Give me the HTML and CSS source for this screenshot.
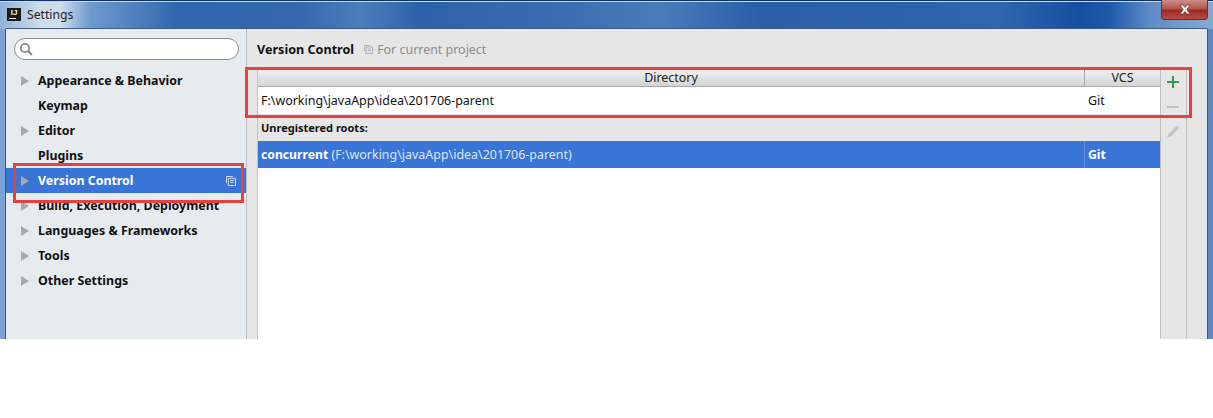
FILE: index.html
```html
<!DOCTYPE html>
<html lang="en">
<head>
<meta charset="utf-8">
<title>Settings</title>
<link rel="stylesheet" href="styles.css">
</head>
<body>
<div class="window">
  <header class="titlebar">
    <div class="title-group">
      <span class="app-logo"><span class="logo-text">IJ</span><span class="logo-bar"></span></span>
      <span class="title-text">Settings</span>
    </div>
    <div class="close-btn">
      <svg width="14" height="11" viewBox="0 0 14 11"><path d="M2 1h3l2 2.500L9 1h3L8.800 5.500 12 10H9L7 7.500 5 10H2l3.200-4.500z" fill="#f4f1f0" stroke="#5a3030" stroke-width=".6"/></svg>
    </div>
  </header>
  <div class="frame">
    <aside class="sidebar">
      <div class="search">
        <svg class="search-icon" width="15" height="15" viewBox="0 0 15 15"><circle cx="6" cy="6" r="4.200" fill="none" stroke="#8a8a8a" stroke-width="1.800"/><path d="M9 9l4 4" stroke="#8a8a8a" stroke-width="2.200"/></svg>
      </div>
      <ul class="tree">
        <li class="tree-item"><span class="arrow"></span>Appearance &amp; Behavior</li>
        <li class="tree-item"><span class="arrow none"></span>Keymap</li>
        <li class="tree-item"><span class="arrow"></span>Editor</li>
        <li class="tree-item"><span class="arrow none"></span>Plugins</li>
        <li class="tree-item selected"><span class="arrow"></span>Version Control
          <svg class="copy-icon" width="10" height="10" viewBox="0 0 11 11"><path d="M.5 7.500V.5h7" fill="none" stroke="#dfe8f7"/><path d="M2.500 2.500h8v8h-8z" fill="none" stroke="#dfe8f7"/><path d="M4.500 5h4M4.500 7h4" stroke="#dfe8f7"/></svg>
        </li>
        <li class="tree-item"><span class="arrow"></span>Build, Execution, Deployment</li>
        <li class="tree-item"><span class="arrow"></span>Languages &amp; Frameworks</li>
        <li class="tree-item"><span class="arrow"></span>Tools</li>
        <li class="tree-item"><span class="arrow"></span>Other Settings</li>
      </ul>
    </aside>
    <main class="content">
      <div class="breadcrumb">
        <span class="heading">Version Control</span>
        <svg class="copy-icon-grey" width="9" height="9" viewBox="0 0 11 11"><path d="M.5 7.500V.5h7" fill="none" stroke="#9aa5ae"/><path d="M2.500 2.500h8v8h-8z" fill="none" stroke="#9aa5ae"/><path d="M4.500 5h4M4.500 7h4" stroke="#9aa5ae"/></svg>
        <span class="scope">For current project</span>
      </div>
      <div class="panel">
        <div class="table-area">
          <div class="thead">
            <div class="th col-dir">Directory</div>
            <div class="th col-vcs">VCS</div>
          </div>
          <div class="row">
            <div class="col-dir cell">F:\working\javaApp\idea\201706-parent</div>
            <div class="col-vcs cell">Git</div>
          </div>
          <div class="section-label">Unregistered roots:</div>
          <div class="row root-selected">
            <div class="col-dir cell"><b>concurrent</b> <span class="root-path">(F:\working\javaApp\idea\201706-parent)</span></div>
            <div class="col-vcs cell"><b>Git</b></div>
          </div>
          <div class="table-fill"></div>
        </div>
        <div class="toolbar">
          <svg width="14" height="14" viewBox="0 0 14 14"><path d="M7 1v12M1 7h12" stroke="#2f9e4a" stroke-width="2"/></svg>
          <svg width="14" height="14" viewBox="0 0 14 14"><path d="M1 7h12" stroke="#c2c2c2" stroke-width="2"/></svg>
          <svg width="14" height="14" viewBox="0 0 14 14"><path d="M1 13l1.500-4L10 1.500c1-.8 2-.5 2.500.2.500.7.500 1.500-.2 2.300L5 11.500z" fill="#c4c4c4"/></svg>
        </div>
      </div>
    </main>
  </div>
</div>
<div class="mark mark-table"></div>
<div class="mark mark-nav"></div>
</body>
</html>
```
FILE: styles.css
```css
* { box-sizing: border-box; }
html, body { margin: 0; padding: 0; background: #fff; }
body { position: relative; width: 1213px; height: 418px; overflow: hidden; font-family: "Noto Sans", "DejaVu Sans", sans-serif; font-size: 12.450px; color: #111; }
.window { height: 339px; display: flex; flex-direction: column; padding: 0 5px 0 5px;
  background: linear-gradient(90deg, #7da2d4 0, #5b8aca 100%); }
.titlebar { height: 29px; margin: 0 -5px; padding: 0 5px 0 7px; display: flex; justify-content: space-between; align-items: flex-start;
  border-top: 1px solid #12305c; border-bottom: 0;
  box-shadow: inset 0 1px 0 #c9d8ec;
  background: linear-gradient(90deg, #8fb0d8 0, #cfdcec 40px, #d0dded 60px, #6f9ad0 90px, #2f66ac 180px, #3568ad 300px, #4c7dbd 360px, #2e62a8 420px, #3a6cb0 560px, #4a7cbc 660px, #2a5fa6 760px, #2f66ae 1000px, #164f9f 1080px, #1f5aa8 1110px, #5f8cc6 1150px, #88a9d2 1213px); }
.title-group { display: flex; align-items: center; gap: 6px; height: 27px; }
.app-logo { width: 14px; height: 13px; background: #1a1a1a; display: flex; flex-direction: column; align-items: center; position: relative; }
.logo-text { color: #f2f2f2; font: bold 8px/9px "Liberation Sans", sans-serif; }
.logo-bar { width: 7px; height: 1px; background: #f2f2f2; margin-top: 1px; align-self: flex-start; margin-left: 2px; }
.title-text { font-size: 12.200px; color: #222; }
.close-btn { width: 47px; height: 20px; margin-top: -1px; border: 1px solid #4e3a44; border-top: 0; border-radius: 0 0 4px 4px; display: flex; align-items: center; justify-content: center;
  background: linear-gradient(180deg, #c98f88 0, #b5564c 45%, #9c2a20 55%, #b84c40 100%); }
.frame { flex: 1; display: flex; min-height: 0; border: 1px solid #3c5a80; border-bottom: 0; border-radius: 2px 2px 0 0; background: #e6e6e6; margin-top: -1px; }
.sidebar { width: 241px; flex: none; background: #e6ebf0; border-right: 1px solid #bcbcbc; padding: 9px 7px 0 8px; }
.search { height: 22px; border: 1px solid #8d8d8d; border-radius: 11px; background: #fff; display: flex; align-items: center; padding-left: 4px; }
.tree { list-style: none; margin: 8px -7px 0 -8px; padding: 0; }
.tree-item { height: 25px; display: flex; align-items: center; font-weight: 700; font-size: 12.400px; color: #111; padding-left: 15px; position: relative; }
.arrow { width: 0; height: 0; border-left: 8px solid #a9a9a9; border-top: 5px solid transparent; border-bottom: 5px solid transparent; margin-right: 9px; flex: none; }
.arrow.none { border-left-color: transparent; }
.selected { background: #3875d6; color: #fff; }
.copy-icon { margin-left: auto; margin-right: 10px; }
.content { flex: 1; min-width: 0; display: flex; flex-direction: column; }
.breadcrumb { height: 40px; padding: 0 0 0 10px; display: flex; align-items: center; flex: none; }
.heading { font-weight: 700; font-size: 12.600px; }
.copy-icon-grey { margin-left: 10px; margin-right: 4px; }
.scope { color: #8c8c8c; font-size: 12.450px; }
.panel { flex: 1; display: flex; min-height: 0; margin-left: 10px; margin-right: 20px; }
.table-area { width: 903px; flex: none; display: flex; flex-direction: column; border-left: 1px solid #c0c0c0; }
.thead { height: 18px; display: flex; background: linear-gradient(180deg, #f2f2f2, #d4d4d4); border-bottom: 1px solid #a8a8a8; flex: none; }
.th { text-align: center; line-height: 17px; color: #222; }
.thead .col-vcs { border-left: 1px solid #a8a8a8; }
.col-dir { flex: 1; min-width: 0; }
.col-vcs { width: 76px; flex: none; }
.row { display: flex; height: 27px; background: #fff; flex: none; align-items: stretch; }
.cell { padding-left: 3px; line-height: 27px; white-space: nowrap; }
.col-vcs.cell { padding-left: 4px; }
.section-label { height: 27px; line-height: 27px; padding-left: 3px; font-weight: 700; font-size: 11px; flex: none; }
.root-selected { background: #3875d6; color: #fff; }
.root-selected .col-vcs { border-left: 1px solid #5a8ce0; }
.root-selected .col-vcs.cell { padding-left: 3px; }
.root-selected b { font-size: 12.200px; }
.root-path { color: #dbe6f8; }
.table-fill { flex: 1; background: #fff; }
.toolbar { flex: 1; border-left: 1px solid #c0c0c0; border-right: 1px solid #c0c0c0; display: flex; flex-direction: column; align-items: center; gap: 11px; padding: 6px 2px 0 0; }
.mark { position: absolute; border: 3px solid #e8403f; }
.mark-table { left: 245px; top: 67px; width: 947px; height: 51px; }
.mark-nav { left: 13px; top: 163px; width: 231px; height: 40px; }
```
